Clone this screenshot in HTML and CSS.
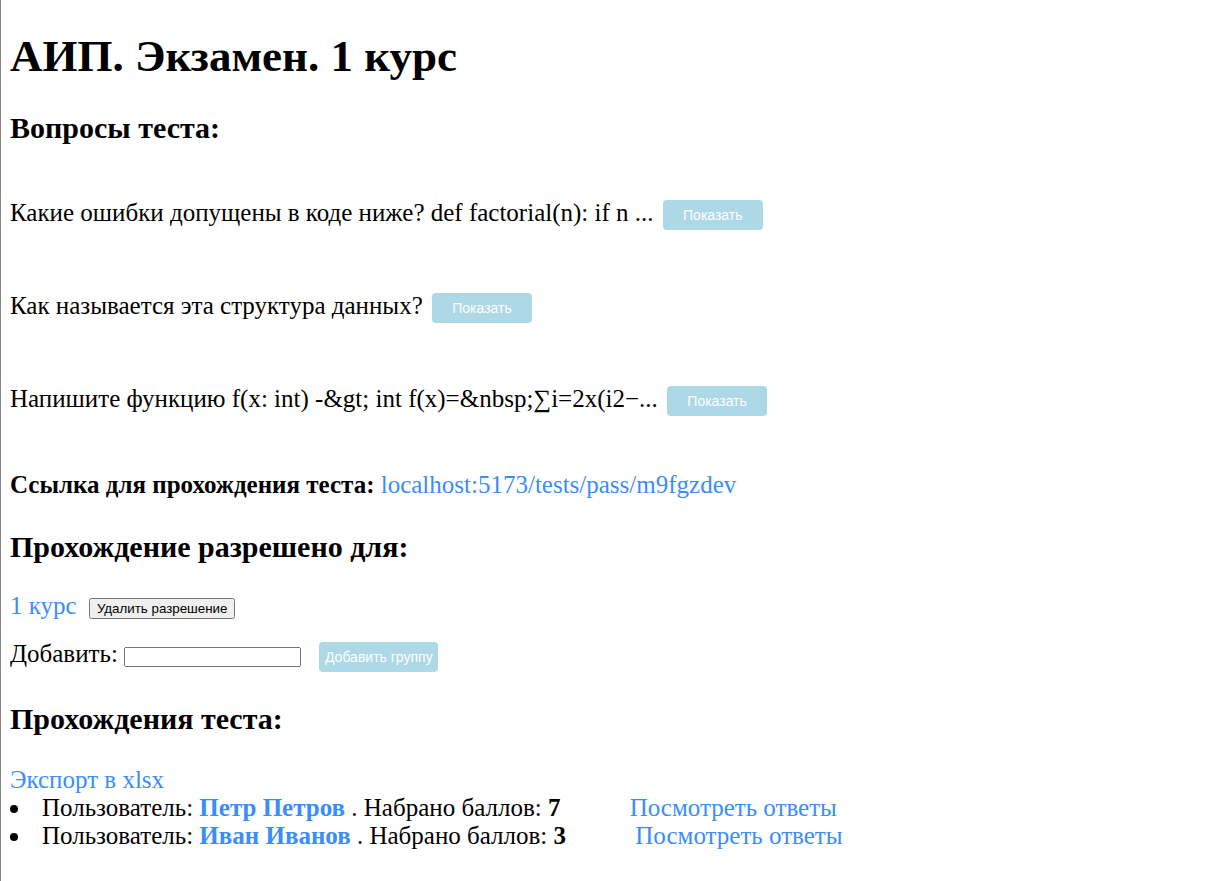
FILE: index.html
```html
<!DOCTYPE html>
<html lang="ru">
<head>
<meta charset="utf-8">
<title>АИП. Экзамен. 1 курс</title>
<link rel="stylesheet" href="styles.css">
</head>
<body>
<div class="page">
  <h1 class="title">АИП. Экзамен. 1 курс</h1>
  <h2 class="section">Вопросы теста:</h2>
  <div class="questions">
    <p class="question">Какие ошибки допущены в коде ниже? def factorial(n): if n ... <button class="btn-blue">Показать</button></p>
    <p class="question">Как называется эта структура данных? <button class="btn-blue">Показать</button></p>
    <p class="question">Напишите функцию f(x: int) -&amp;gt; int f(x)=&amp;nbsp;∑i=2x(i2−... <button class="btn-blue">Показать</button></p>
  </div>
  <p class="link-row"><b>Ссылка для прохождения теста:</b> <a class="link" href="#">localhost:5173/tests/pass/m9fgzdev</a></p>
  <h2 class="section">Прохождение разрешено для:</h2>
  <p class="perm"><a class="link" href="#">1 курс</a> <button class="btn-default">Удалить разрешение</button></p>
  <p class="add-row">Добавить: <input class="add-input" type="text"> <button class="btn-blue btn-add">Добавить группу</button></p>
  <h2 class="section">Прохождения теста:</h2>
  <a class="link export" href="#">Экспорт в xlsx</a>
  <ul class="results">
    <li>Пользователь: <a class="link user" href="#">Петр Петров</a> . Набрано баллов: <b>7</b> <a class="link answers" href="#">Посмотреть ответы</a></li>
    <li>Пользователь: <a class="link user" href="#">Иван Иванов</a> . Набрано баллов: <b>3</b> <a class="link answers" href="#">Посмотреть ответы</a></li>
  </ul>
</div>
</body>
</html>
```
FILE: styles.css
```css
html {
  border-left: 1px solid #888;
  min-height: 100%;
  box-sizing: border-box;
}
body {
  margin: 0;
  padding: 0 8px 0 9px;
  font-family: "Liberation Serif", "Times New Roman", serif;
  font-size: 25px;
  color: #000;
}
.title {
  font-size: 45px;
  margin: 30px 0 29px;
}
.section {
  font-size: 30px;
  margin: 29px 0 28px;
}
.questions {
  margin-top: 54px;
}
.question {
  margin: 61.5px 0;
}
.questions .question:first-child {
  margin-top: 0;
}
.questions .question:last-child {
  margin-bottom: 0;
}
.link-row {
  margin: 55.5px 0 31px;
}
.perm {
  margin: 28px 0 20px;
}
.add-row {
  margin: 20px 0 30px;
}
.link {
  color: #3a8dfd;
  text-decoration: none;
}
.btn-blue {
  background: #add8e6;
  color: #fff;
  border: none;
  border-radius: 4px;
  font-family: "Liberation Sans", Arial, sans-serif;
  font-size: 14px;
  width: 100px;
  height: 30px;
  padding: 0;
  white-space: nowrap;
  margin-left: 3px;
  vertical-align: middle;
}
.btn-add {
  width: 119px;
  margin-left: 12px;
}
.btn-default {
  font-family: "Liberation Sans", Arial, sans-serif;
  font-size: 13.333px;
  margin-left: 6px;
  vertical-align: middle;
}
.add-input {
  width: 177px;
  height: 20px;
  box-sizing: border-box;
  vertical-align: middle;
}
.export {
  display: block;
  margin-top: 30px;
}
.results {
  margin: 0;
  padding: 0;
  list-style: none;
}
.results li {
  line-height: 28px;
}
.results li::before {
  content: "";
  display: inline-block;
  width: 8px;
  height: 8px;
  border-radius: 50%;
  background: #000;
  margin-right: 24px;
  vertical-align: 3px;
}
.user {
  font-weight: bold;
}
.answers {
  margin-left: 63px;
}
```
